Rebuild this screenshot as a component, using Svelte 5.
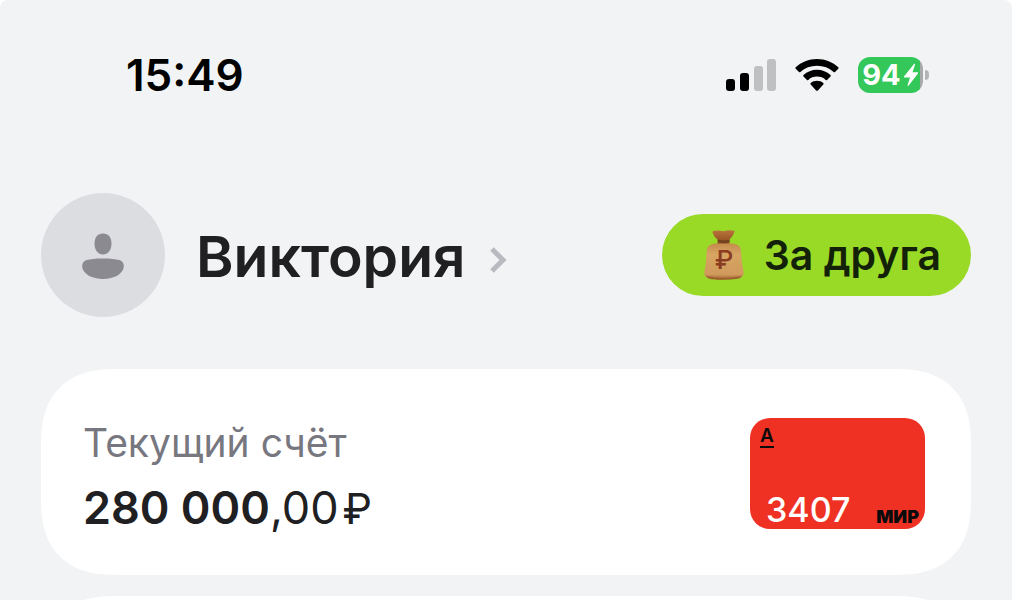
<script lang="ts">
    type Account = {
        title: string;
        whole: string;
        cents: string;
        card: string;
    };

    let {
        time = "15:49",
        battery = 94,
        userName = "Виктория",
    }: { time?: string; battery?: number; userName?: string } = $props();

    const account: Account = {
        title: "Текущий счёт",
        whole: "280 000",
        cents: ",00",
        card: "3407",
    };
</script>

<div class="screen">
    <header class="status-bar">
        <time class="clock">{time}</time>
        <div class="indicators">
            <svg class="signal" viewBox="0 0 50 34" aria-hidden="true">
                <rect x="0" y="21" width="9" height="12" rx="3" />
                <rect x="14" y="15" width="9" height="18" rx="3" />
                <rect class="off" x="28" y="8" width="9" height="25" rx="3" />
                <rect class="off" x="41" y="1" width="9" height="32" rx="3" />
            </svg>
            <svg class="wifi" viewBox="0 0 44 34" aria-hidden="true">
                <path d="M22 1C13.700 1 6.200 4.200 .7 9.300q-.7.700 0 1.400l3.300 3.300q.7.700 1.400 0C9.900 9.900 15.500 7.700 22 7.700s12.100 2.200 16.600 6.300q.7.700 1.400 0l3.300-3.300q.7-.7 0-1.400C37.800 4.200 30.300 1 22 1Z" />
                <path d="M22 11.800c-5.200 0-9.900 2-13.500 5.200q-.7.700 0 1.400l3.500 3.500q.6.600 1.300 0c2.400-2.200 5.300-3.300 8.700-3.300s6.300 1.100 8.700 3.300q.7.600 1.300 0l3.500-3.500q.7-.7 0-1.400C31.900 13.800 27.200 11.800 22 11.800Z" />
                <path d="M22 22.700c-2.400 0-4.700.8-6.300 2.200q-.8.700 0 1.500l5.400 6q.9.900 1.800 0l5.400-6q.8-.8 0-1.500c-1.600-1.400-3.900-2.200-6.300-2.200Z" />
            </svg>
            <div class="battery">
                <div class="battery-body">
                    <span>{battery}</span>
                    <svg class="bolt" viewBox="0 0 16 24" aria-hidden="true">
                        <path d="M11 1 1 13.500q-.5 1 .6 1H7L4.600 22q-.1 1.500 1.100.5L15 10.500q.5-1.200-.6-1.200H9.500L12 1.800Q12 .3 11 1Z" />
                    </svg>
                </div>
                <div class="battery-cap"></div>
            </div>
        </div>
    </header>

    <section class="profile">
        <a class="user" href="#profile">
            <span class="avatar">
                <svg viewBox="0 0 42 48" aria-hidden="true">
                    <path d="M21 2.500c5.500 0 8.500 4 8.500 10.200S26 23.500 21 23.500s-8.500-4.600-8.500-10.800S15.500 2.500 21 2.500Z" />
                    <path d="M21 27.500c8 0 12.500.6 16.500 1.500 3 .7 4.500 3.500 4.300 7C41 43 32 48 21 48S1 43 .2 36c-.2-3.500 1.300-6.300 4.300-7C8.500 28.100 13 27.500 21 27.500Z" />
                </svg>
            </span>
            <span class="user-name">{userName}</span>
            <svg class="chevron" viewBox="0 0 18 26" aria-hidden="true">
                <path d="m3 2 11 11L3 24" />
            </svg>
        </a>
        <button class="btn-friend" type="button">
            <svg class="bag" viewBox="0 0 40 50" aria-hidden="true">
                <defs>
                    <linearGradient id="bag-body" x1="0" y1="0" x2="0" y2="1">
                        <stop offset="0" stop-color="#c58b4c" />
                        <stop offset=".3" stop-color="#d7a563" />
                        <stop offset=".85" stop-color="#d09a5c" />
                        <stop offset="1" stop-color="#a5642f" />
                    </linearGradient>
                    <linearGradient id="bag-neck" x1="0" y1="0" x2="0" y2="1">
                        <stop offset="0" stop-color="#b8743a" />
                        <stop offset="1" stop-color="#8a481d" />
                    </linearGradient>
                </defs>
                <path fill="url(#bag-neck)" d="M9.500 1q5-1 10 .3Q25-.3 30 .800q1 .5.300 1.500Q29 7 25.500 9.500V15h-12V9.500Q10 7 8.500 2.500 8.300 1.300 9.500 1Z" />
                <path fill="#70401f" d="M14 9.500q6 2 11.500 0V12q-5.500 2-11.500 0Z" />
                <path fill="url(#bag-body)" d="M11 13.500h17.500c6.500.8 8.500 3.500 8.700 9.500.2 7 .8 12 2.200 17.500 1.100 5.500-2.400 8-7.400 8.500-12 1.200-24 .7-25 .3-5-.8-7.500-3.300-6.400-8.800C2 34 2.300 30 2.500 23c.2-6 2.500-8.700 8.500-9.500Z" />
                <path fill="#8c4e25" opacity=".5" d="M2 45.500q18 4.500 36 0-2 3-6 3.500-12 1.200-24 0-4-.5-6-3.500Z" />
                <text x="20" y="39" text-anchor="middle">₽</text>
            </svg>
            <span>За друга</span>
        </button>
    </section>

    <main class="accounts">
        <article class="account">
            <div class="account-info">
                <h2>{account.title}</h2>
                <p class="balance">
                    <strong>{account.whole}</strong>{account.cents}<span class="currency">₽</span>
                </p>
            </div>
            <div class="bank-card">
                <span class="bank-logo">A</span>
                <div class="card-bottom">
                    <span class="card-number">{account.card}</span>
                    <span class="card-system">МИР</span>
                </div>
            </div>
        </article>
        <article class="account"></article>
    </main>
</div>

<style>
    :global(body) {
        background: #fff;
    }

    .screen {
        height: 100vh;
        overflow: hidden;
        box-sizing: border-box;
        padding: 48px 41px 0;
        background: #f1f3f5;
        border-radius: 8px 8px 0 0;
        color: #202022;
        font-family: Inter, "Liberation Sans", sans-serif;
    }

    .status-bar {
        display: flex;
        align-items: center;
        justify-content: space-between;
        height: 54px;
        padding: 0 42px 0 85px;
        color: #000;
    }

    .clock {
        font-size: 44px;
        font-weight: 600;
    }

    .indicators {
        display: flex;
        align-items: center;
        gap: 19px;
    }

    .signal {
        width: 50px;
        height: 34px;
    }

    .signal .off {
        fill: #bfc0c2;
    }

    .wifi {
        width: 44px;
        height: 34px;
    }

    .battery {
        display: flex;
        align-items: center;
        gap: 2px;
    }

    .battery-body {
        display: flex;
        align-items: center;
        justify-content: center;
        gap: 2px;
        box-sizing: border-box;
        width: 65px;
        height: 36px;
        border-radius: 12px;
        background: linear-gradient(90deg, #34c759 95%, #a7aaa9 95%);
        color: #fff;
        font-size: 29px;
        font-weight: 700;
        line-height: 36px;
    }

    .bolt {
        width: 16px;
        height: 24px;
        fill: #fff;
    }

    .battery-cap {
        width: 4px;
        height: 10px;
        border-radius: 0 4px 4px 0;
        background: #b4b5b7;
    }

    .profile {
        display: flex;
        align-items: center;
        justify-content: space-between;
        margin-top: 91px;
    }

    .user {
        display: flex;
        align-items: center;
        color: inherit;
        text-decoration: none;
    }

    .avatar {
        display: flex;
        align-items: center;
        justify-content: center;
        width: 124px;
        height: 124px;
        margin-right: 31px;
        border-radius: 50%;
        background: #dcdde1;
    }

    .avatar svg {
        width: 42px;
        height: 48px;
        fill: #8a8a90;
    }

    .user-name {
        padding-top: 4px;
        font-size: 57px;
        font-weight: 600;
        line-height: 72px;
    }

    .chevron {
        width: 18px;
        height: 26px;
        margin: 10px 0 0 23px;
        fill: none;
        stroke: #b9bac0;
        stroke-width: 5;
    }

    .btn-friend {
        display: flex;
        align-items: center;
        gap: 20px;
        height: 82px;
        padding: 0 30px 0 42px;
        border: none;
        border-radius: 41px;
        background: #99da27;
        color: #142109;
        font-family: inherit;
        font-size: 41px;
        font-weight: 600;
        cursor: pointer;
    }

    .bag {
        width: 40px;
        height: 50px;
    }

    .bag text {
        fill: #8a3b20;
        font-size: 26px;
        font-weight: 500;
    }

    .accounts {
        display: flex;
        flex-direction: column;
        gap: 21px;
        margin-top: 52px;
    }

    .account {
        display: flex;
        align-items: center;
        justify-content: space-between;
        flex-shrink: 0;
        box-sizing: border-box;
        min-height: 206px;
        padding: 48px 46px 38px 42px;
        border-radius: 76px;
        corner-shape: superellipse(1.3);
        background: #fff;
    }

    h2 {
        margin: 0;
        color: #77777f;
        font-size: 39px;
        font-weight: 400;
        line-height: 50px;
    }

    .balance {
        margin: 12px 0 0;
        font-size: 45px;
        line-height: 56px;
    }

    .balance strong {
        font-weight: 600;
    }

    .currency {
        margin-left: 4px;
        font-size: 42px;
    }

    .bank-card {
        display: flex;
        flex-direction: column;
        align-items: flex-start;
        justify-content: space-between;
        box-sizing: border-box;
        width: 175px;
        height: 111px;
        margin-bottom: 8px;
        padding: 8px 6px 2px 10px;
        border-radius: 20px;
        background: #ef3124;
    }

    .bank-logo {
        border-bottom: 2px solid #0b0b0c;
        color: #0b0b0c;
        font-size: 19px;
        font-weight: 600;
        line-height: 20px;
    }

    .card-bottom {
        display: flex;
        align-items: flex-end;
        justify-content: space-between;
        width: 100%;
        padding-left: 6px;
        box-sizing: border-box;
    }

    .card-number {
        color: #fff;
        font-size: 34px;
        font-weight: 500;
        line-height: 34px;
    }

    .card-system {
        color: #0b0b0c;
        font-size: 18px;
        font-weight: 900;
        line-height: 20px;
    }
</style>
